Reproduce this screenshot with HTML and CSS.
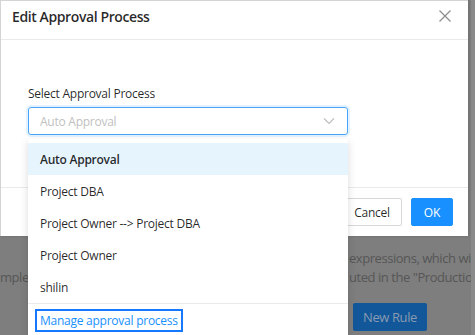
FILE: index.html
```html
<!DOCTYPE html>
<html lang="en">
<head>
  <meta charset="UTF-8">
  <title>Edit Approval Process</title>
  <link rel="stylesheet" href="styles.css">
</head>
<body>

<!-- page behind the mask -->
<div class="page">
  <div class="page-left">
    <p class="page-line"></p>
    <p class="page-line">mple,</p>
  </div>
  <div class="page-right">
    <p class="page-line">expressions, which will c</p>
    <p class="page-line">uted in the "Production</p>
    <button class="btn-new">New Rule</button>
  </div>
</div>
<div class="scrollbar"></div>

<!-- modal -->
<div class="modal">
  <div class="modal-head">
    <span class="modal-title">Edit Approval Process</span>
    <svg class="close" width="12" height="12" viewBox="0 0 12 12">
      <path d="M0.5 0.5 L11.5 11.5 M11.5 0.5 L0.5 11.5" stroke="#8c8c8c" stroke-width="1.2" fill="none"/>
    </svg>
  </div>
  <div class="modal-body">
    <div class="field-label">Select Approval Process</div>
    <div class="select">
      <span class="placeholder">Auto Approval</span>
      <svg width="12" height="8" viewBox="0 0 12 8">
        <path d="M1 1.5 L6 6.5 L11 1.5" stroke="#bfbfbf" stroke-width="1.2" fill="none"/>
      </svg>
    </div>
  </div>
  <div class="modal-foot">
    <button class="btn">Cancel</button>
    <button class="btn btn-primary">OK</button>
  </div>
</div>

<!-- open dropdown -->
<div class="dropdown">
  <div class="option selected">Auto Approval</div>
  <div class="option">Project DBA</div>
  <div class="option">Project Owner --&gt; Project DBA</div>
  <div class="option">Project Owner</div>
  <div class="option">shilin</div>
  <div class="dropdown-foot">
    <a class="manage-link" href="#">Manage approval process</a>
  </div>
</div>

</body>
</html>
```

FILE: styles.css
```css
* { box-sizing: border-box; }

body {
  margin: 0;
  width: 475px;
  height: 335px;
  overflow: hidden;
  position: relative;
  background: #7e7e7e;
  font-family: "Open Sans", "Noto Sans", sans-serif;
  font-size: 12px;
  letter-spacing: -0.25px;
  color: rgba(0,0,0,0.85);
}

/* page under the mask */

.page {
  display: grid;
  grid-template-columns: 348px 123px;
  padding-top: 249px;
  color: #565656;
  font-size: 13px;
  letter-spacing: -0.45px;
}

.page-line {
  margin: 0;
  height: 19px;
  line-height: 19px;
  white-space: nowrap;
}

.page-right {
  padding-left: 1px;
  overflow: hidden;
}

.btn-new {
  margin: 16px 0 0 4px;
  height: 28px;
  padding: 0 10px;
  border: none;
  border-radius: 2px;
  background: #11579a;
  color: #8a9ab0;
  font-family: inherit;
  font-size: 13px;
  letter-spacing: -0.4px;
}

.scrollbar {
  position: absolute;
  top: 0;
  right: 0;
  width: 4px;
  height: 100%;
  background: #8a8a8a;
}

/* modal */

.modal {
  position: absolute;
  top: 0;
  left: 0;
  width: 468px;
  background: #fff;
  border-top: 1px solid #d4d4d4;
  border-left: 1px solid #d4d4d4;
  box-shadow: 1px 0 3px rgba(0,0,0,0.15);
}

.modal-head {
  height: 39px;
  padding: 6px 17px 0 11px;
  display: flex;
  align-items: flex-start;
  justify-content: space-between;
  border-bottom: 1px solid #eaeaea;
}

.modal-title {
  font-size: 14px;
  line-height: 19px;
  font-weight: 600;
  letter-spacing: -0.4px;
  color: rgba(0,0,0,0.85);
}

.close {
  margin-top: 3px;
}

.modal-body {
  padding: 46px 0 0 27px;
  height: 148px;
  border-bottom: 1px solid #eaeaea;
}

.field-label {
  line-height: 16px;
  margin-bottom: 5px;
}

.select {
  width: 320px;
  height: 28px;
  padding: 0 12px 0 11px;
  border: 1px solid #4aa3f5;
  border-radius: 3px;
  box-shadow: 0 0 0 2px rgba(24,144,255,0.12);
  display: flex;
  align-items: center;
  justify-content: space-between;
}

.placeholder {
  color: #bfbfbf;
}

.modal-foot {
  height: 48px;
  padding: 0 15px 0 0;
  display: flex;
  align-items: center;
  justify-content: flex-end;
  gap: 9px;
}

.btn {
  height: 28px;
  padding: 0 11px;
  border: 1px solid #d9d9d9;
  border-radius: 2px;
  background: #fff;
  color: rgba(0,0,0,0.85);
  font-family: inherit;
  font-size: 12px;
  letter-spacing: -0.25px;
}

.btn-primary {
  padding: 0 12px;
  border-color: #1890ff;
  background: #1890ff;
  color: #fff;
}

/* dropdown */

.dropdown {
  position: absolute;
  top: 139px;
  left: 28px;
  width: 320px;
  padding-top: 4px;
  background: #fff;
  box-shadow: 0 3px 8px rgba(0,0,0,0.15);
}

.option {
  height: 32px;
  padding: 0 12px;
  display: flex;
  align-items: center;
  white-space: nowrap;
}

.option.selected {
  background: #e6f4fe;
  font-weight: 600;
}

.dropdown-foot {
  border-top: 1px solid #eaeaea;
  padding: 5px 0 10px 7px;
}

.manage-link {
  display: inline-block;
  line-height: 15px;
  padding: 2px 3px;
  border: 2px solid #1677ff;
  color: #1890ff;
  text-decoration: none;
}
```
